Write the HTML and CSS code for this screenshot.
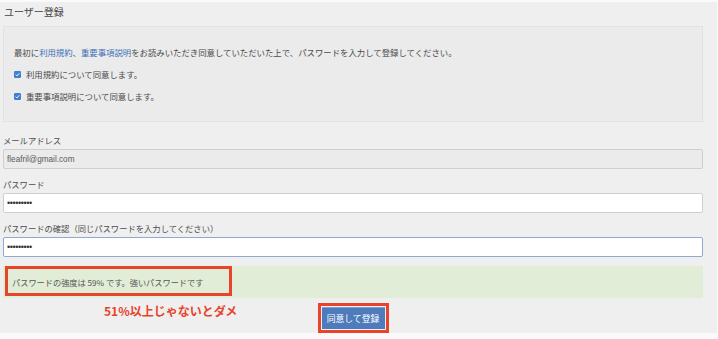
FILE: index.html
```
<!DOCTYPE html>
<html>
<head>
<meta charset="utf-8" />
<title>ユーザー登録</title>
<link rel="stylesheet" href="styles.css">
</head>
<body>
<div class="panel">
	<h1>ユーザー登録</h1>
	<div class="agree">
		<p>最初に<a href="javascript:;">利用規約</a>、<a href="javascript:;">重要事項説明</a>をお読みいただき同意していただいた上で、パスワードを入力して登録してください。</p>
		<p><span class="chk"><svg viewBox="0 0 8 8" width="7" height="7"><rect width="8" height="8" rx="1.5" fill="#3f7fd4"/><path d="M2 4.2 L3.4 5.6 L6.1 2.6" fill="none" stroke="#fff" stroke-width="1.1"/></svg></span>利用規約について同意します。</p>
		<p><span class="chk"><svg viewBox="0 0 8 8" width="7" height="7"><rect width="8" height="8" rx="1.5" fill="#3f7fd4"/><path d="M2 4.2 L3.4 5.6 L6.1 2.6" fill="none" stroke="#fff" stroke-width="1.1"/></svg></span>重要事項説明について同意します。</p>
	</div>
	<label>メールアドレス</label>
	<input class="field disabled" type="text" value="fleafril@gmail.com" disabled>
	<label>パスワード</label>
	<input class="field" type="password" value="abcdefghi">
	<label>パスワードの確認（同じパスワードを入力してください）</label>
	<input class="field focus" type="password" value="abcdefghi">
	<div class="strength">
		パスワードの強度は 59% です。強いパスワードです
		<span class="mark"></span>
	</div>
	<div class="actions">
		<span class="note">51%以上じゃないとダメ</span>
		<a class="btn" href="javascript:;">同意して登録</a>
	</div>
</div>
</body>
</html>
```
FILE: styles.css
```
*{margin:0;padding:0;box-sizing:border-box;}
body{background:#fafafa;font-family:"Noto Sans CJK JP","Liberation Sans",sans-serif;color:#4a4a4a;}
a{text-decoration:none;}

.panel{margin-top:2px;width:717px;padding:0 14px 4px 3px;background:#efefef;}
h1{font-size:10px;font-weight:normal;line-height:20px;margin:1px 0 4px 1px;color:#444;}

.agree{background:#ebebeb;border:1px solid #e2e2e2;padding:18px 10px 18px 10px;}
.agree p{font-size:8.4px;line-height:14px;margin-bottom:8px;display:flex;align-items:center;}
.agree p:last-child{margin-bottom:0;}
.agree a{color:#3d6fb8;}
.chk{display:inline-flex;margin-right:5px;}

label{display:block;font-size:8.3px;line-height:14px;margin:8px 0 2px;color:#4d4d4d;}
.agree + label{margin-top:11px;}
.field{display:block;width:100%;height:20px;border:1px solid #cfcfcf;border-radius:2px;background:#fff;padding:0 3px;font-family:"Liberation Sans",sans-serif;font-size:8.2px;color:#5a5a5a;outline:none;}
.field[type=password]{font-size:9px;letter-spacing:-0.4px;color:#333;}
.disabled{background:#ebebeb;}
.focus{border-color:#8fa9d3;}

.strength{position:relative;margin-top:9px;height:32px;background:#e2edd7;font-size:8.2px;line-height:32px;padding-left:9px;color:#555;}
.mark{position:absolute;left:2px;top:0;width:227px;height:30px;border:3px solid #e8432b;}

.actions{position:relative;display:flex;justify-content:center;margin-top:9px;}
.note{position:absolute;left:101px;top:-4px;font-size:12px;font-weight:bold;line-height:16px;color:#e8432b;}
.btn{display:block;width:63px;height:22px;line-height:22px;text-align:center;background:#4d7bbb;border-top:1px solid #7a9fd0;color:#fff;font-size:8.8px;outline:3px solid #e8432b;outline-offset:1px;}
```
